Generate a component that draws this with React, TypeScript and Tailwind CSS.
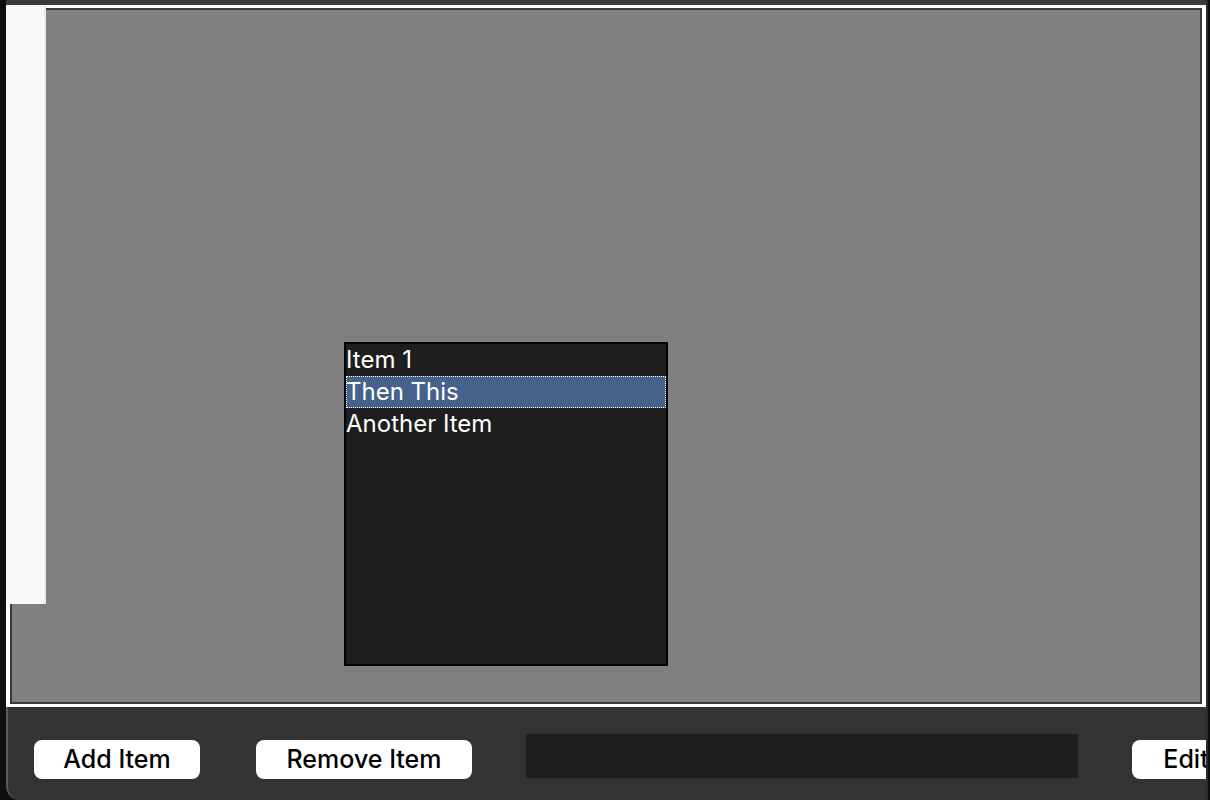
import React from "react";

const items = ["Item 1", "Then This", "Another Item"];

export default function App() {
  const selected = 1;

  return (
    <div
      className="relative flex h-[800px] w-[1210px] overflow-hidden bg-[#0f0f0f] pl-[6px]"
      style={{ fontFamily: "Inter, 'Liberation Sans', sans-serif" }}
    >
      <div className="flex h-full w-[1200px] flex-col overflow-hidden">
        {/* title bar remnant */}
        <div className="h-[5px] shrink-0 bg-[#3a3a3a]" />

        {/* main white panel */}
        <div className="relative flex h-[702px] shrink-0 bg-white pb-[3px] pl-[4px] pr-[4px] pt-[3px]">
          <div className="flex flex-1 border-2 border-[#3a3a3a] bg-[#808080] pl-[332px] pt-[332px]">
            <div className="flex h-[324px] w-[324px] flex-col border-2 border-black bg-[#1e1e1e]">
              {items.map((item, i) => (
                <div
                  key={item}
                  className={
                    i === selected
                      ? "flex h-[32px] items-center border border-dotted border-white bg-[#46618b] text-[24px] leading-none text-white"
                      : "flex h-[32px] items-center text-[24px] leading-none text-white"
                  }
                >
                  <span className={i === selected ? "-ml-px" : ""}>{item}</span>
                </div>
              ))}
            </div>
          </div>

          {/* white side strip over the canvas */}
          <div className="absolute left-0 top-0 h-[599px] w-[40px] border-r-2 border-[#ececec] bg-[#f9f9f9]" />
        </div>

        {/* bottom toolbar */}
        <div className="flex flex-1 items-start rounded-bl-[14px] border-l-2 border-[#5a5a5a] bg-[#333333] pl-[26px]">
          <button className="mt-[33px] h-[39px] w-[166px] shrink-0 rounded-[8px] bg-white text-[25px] font-medium text-black">
            Add Item
          </button>
          <button className="ml-[56px] mt-[33px] h-[39px] w-[216px] shrink-0 rounded-[8px] bg-white text-[25px] font-medium text-black">
            Remove Item
          </button>
          <div className="ml-[54px] mt-[27px] h-[44px] w-[552px] shrink-0 bg-[#1f1f1f]" />
          <button className="ml-[54px] mt-[33px] h-[39px] w-[108px] shrink-0 rounded-[8px] bg-white text-[25px] font-medium text-black">
            Edit
          </button>
        </div>
      </div>
      <div className="h-full w-[2px] bg-[#2a2a2a]" />
    </div>
  );
}
